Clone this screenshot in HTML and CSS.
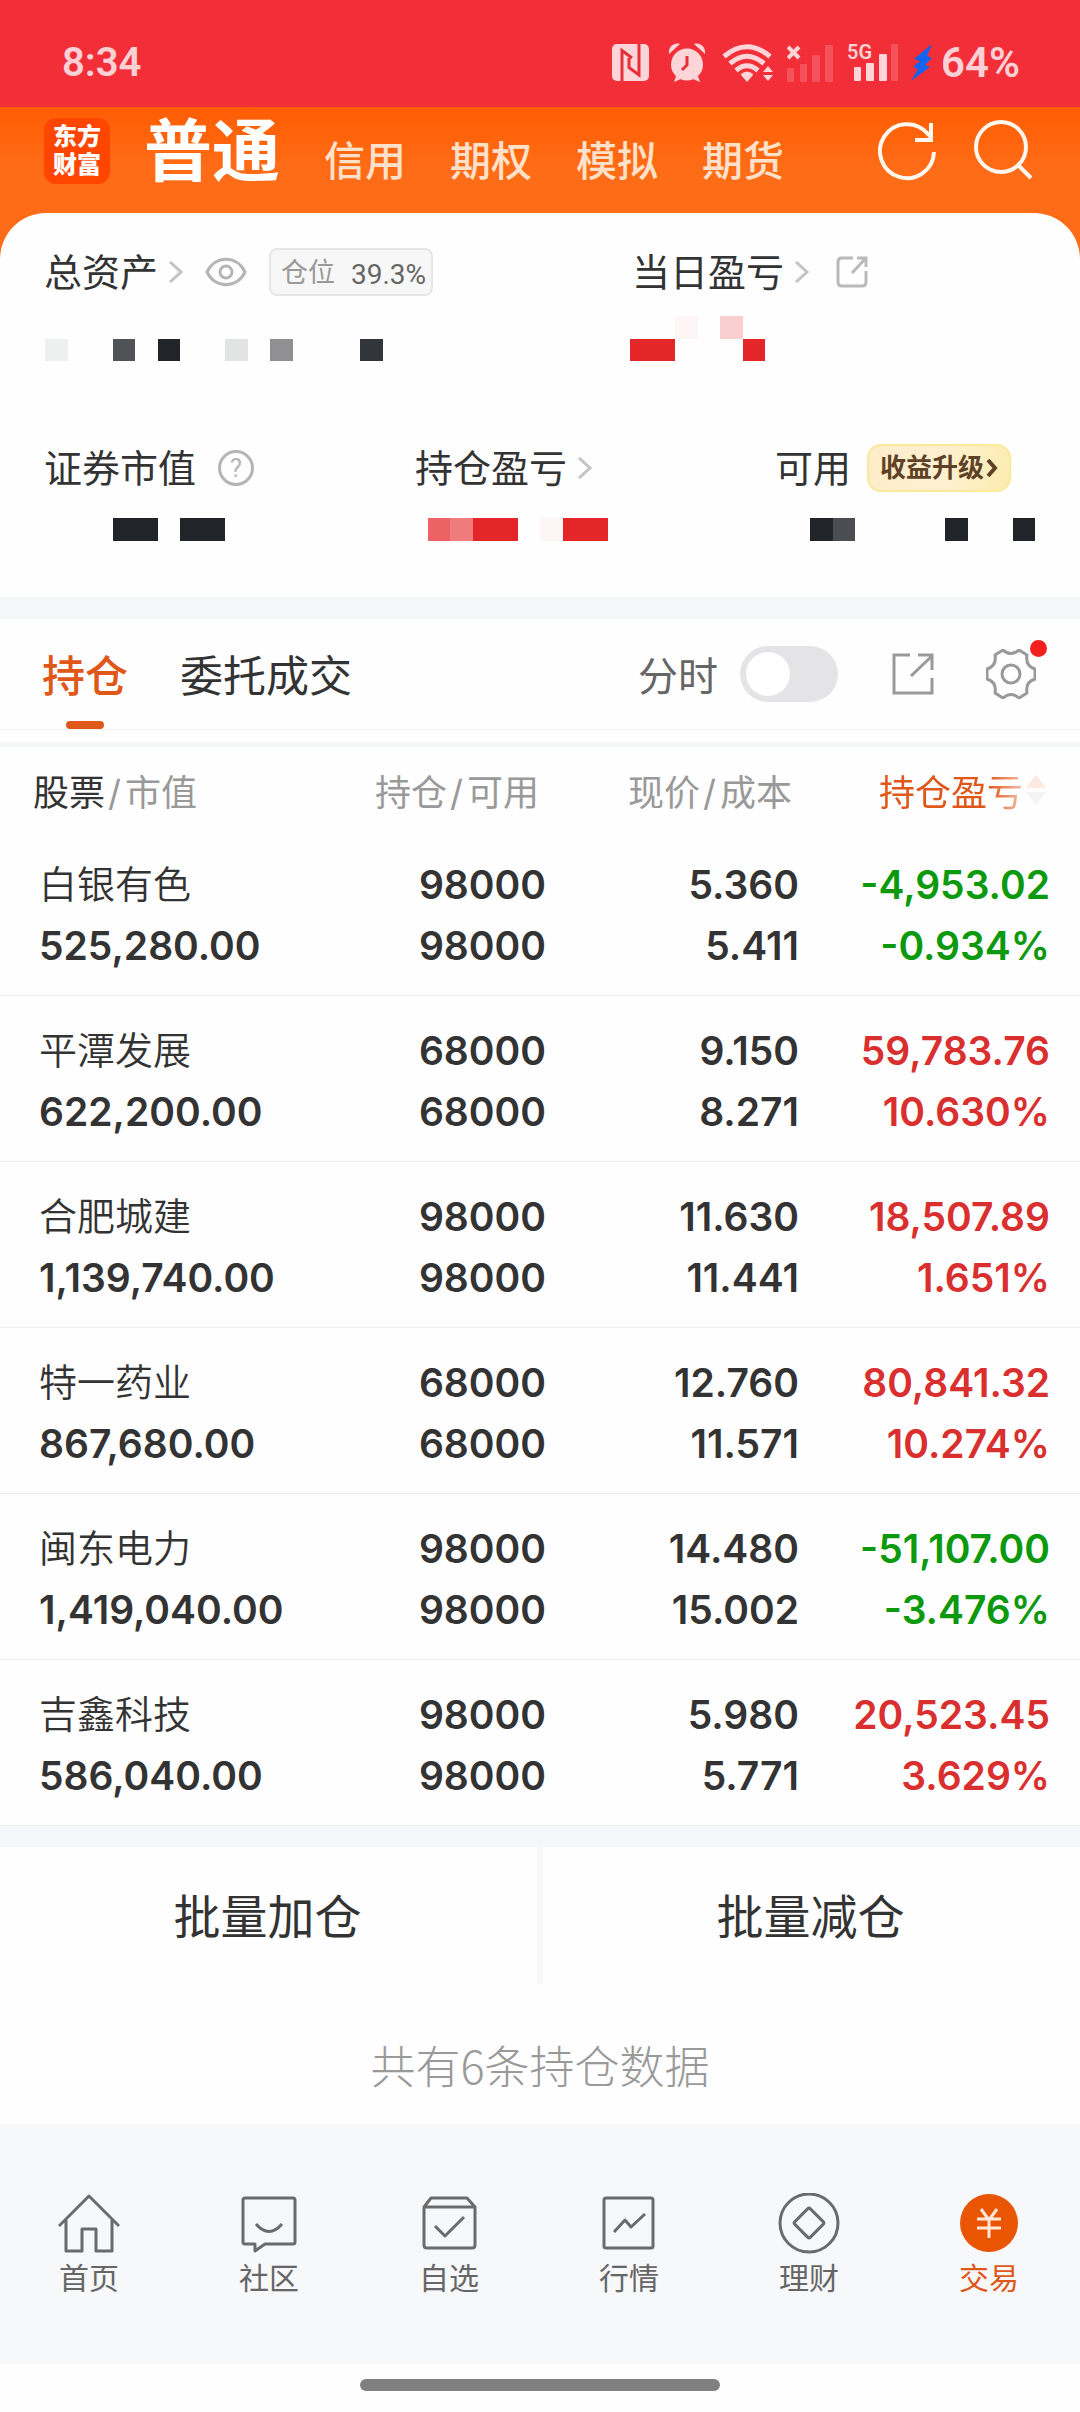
FILE: index.html
```html
<!DOCTYPE html>
<html lang="zh-CN">
<head>
    <meta charset="UTF-8">
    <meta name="viewport" content="width=device-width, initial-scale=1.0">
    <title>东方财富 - 交易</title>
    <link rel="stylesheet" href="styles.css">
</head>
<body>

    <!-- Status Bar -->
    <div class="status-bar">
        <span class="clock">8:34</span>
        <div class="status-icons">
            <svg class="nfc" width="37" height="37" viewBox="0 0 37 37">
                <rect width="37" height="37" rx="5" fill="#fdd5d8"/>
                <path d="M10 37V6.500L20 14M27 0V31L17 23.500V14" fill="none" stroke="#e5303a" stroke-width="3"/>
            </svg>
            <svg class="alarm" width="38" height="39" viewBox="0 0 38 39">
                <g fill="#fdd5d8">
                    <circle cx="19" cy="21.500" r="16"/>
                    <path d="M1 11C0 4 6-1 12 1zM37 11C38 4 32-1 26 1z"/>
                    <path d="M8 33l5 3-7 3zM30 33l-5 3 7 3z"/>
                </g>
                <path d="M19 13v9l-5 5" fill="none" stroke="#e5303a" stroke-width="3"/>
            </svg>
            <svg class="wifi" width="52" height="38" viewBox="0 0 52 38">
                <g fill="none" stroke="#fdd5d8" stroke-width="5">
                    <path d="M2 12.500Q25-7 48 12.500"/>
                    <path d="M8 19.500Q25 5 42 19.500"/>
                    <path d="M14 26.500Q25 17 36 26.500"/>
                </g>
                <path d="M19 30q6-5 12 0v1l-6 7-6-7z" fill="#fdd5d8"/>
                <path d="M46 22l5 6H41zM41 31h10l-5 6z" fill="#fdd5d8"/>
            </svg>
            <svg class="signal" width="46" height="38" viewBox="0 0 46 38">
                <g fill="#f6525b">
                    <rect y="24" width="7" height="14" rx="1"/>
                    <rect x="13" y="20" width="7" height="18" rx="1"/>
                    <rect x="25" y="11" width="8" height="27" rx="1"/>
                    <rect x="38" y="1" width="8" height="37" rx="1"/>
                </g>
                <path d="M1 3l11 11M12 3L1 14" stroke="#fdd5d8" stroke-width="4"/>
            </svg>
            <div class="mobile">
                <svg width="44" height="37" viewBox="0 0 44 37">
                    <rect y="23" width="7" height="14" rx="1" fill="#fdd5d8"/>
                    <rect x="12" y="19" width="8" height="18" rx="1" fill="#fdd5d8"/>
                    <rect x="25" y="10" width="8" height="27" rx="1" fill="#fdd5d8"/>
                    <rect x="37" y="0" width="7" height="37" rx="1" fill="#f6525b"/>
                </svg>
                <span class="network">5G</span>
            </div>
            <svg class="bolt" width="22" height="37" viewBox="0 0 22 37">
                <path d="M21 0L3 15l6 2-7 6 5 2L0 37 19 23l-5-2 7-7-5-2z" fill="#1264f0"/>
            </svg>
            <span class="battery">64%</span>
        </div>
    </div>

    <div class="top">
        <!-- Header Section -->
        <header>
            <div class="logo">东方<br>财富</div>
            <nav class="accounts">
                <a href="#" class="current">普通</a>
                <a href="#">信用</a>
                <a href="#">期权</a>
                <a href="#">模拟</a>
                <a href="#">期货</a>
            </nav>
            <div class="header-actions">
                <button type="button" aria-label="刷新">
                    <svg width="60" height="62" viewBox="0 0 60 62" fill="none" stroke="#fff6ee" stroke-width="4">
                        <path d="M56 32A27 27 0 1 1 49 13L54 18"/>
                        <path d="M53 3V20H37"/>
                    </svg>
                </button>
                <button type="button" aria-label="搜索">
                    <svg width="60" height="62" viewBox="0 0 60 62" fill="none" stroke="#fff6ee" stroke-width="4">
                        <circle cx="27" cy="27" r="25"/>
                        <path d="M44 45L57 58"/>
                    </svg>
                </button>
            </div>
        </header>

        <!-- Asset Summary -->
        <section class="summary">
            <div class="labels labels-two">
                <div class="label">
                    <a href="#">总资产<svg class="chevron" width="14" height="22" viewBox="0 0 14 22"><path d="M1 1l11 10L1 21"/></svg></a>
                    <button type="button" class="eye" aria-label="隐藏金额">
                        <svg width="42" height="30" viewBox="0 0 42 30" fill="none" stroke="#b5b5b5" stroke-width="3">
                            <path d="M2 15C10-2 32-2 40 15 32 32 10 32 2 15z"/>
                            <circle cx="21" cy="15" r="6"/>
                        </svg>
                    </button>
                    <span class="position">仓位 <b>39.3%</b></span>
                </div>
                <div class="label">
                    <a href="#">当日盈亏<svg class="chevron" width="14" height="22" viewBox="0 0 14 22"><path d="M1 1l11 10L1 21"/></svg></a>
                    <button type="button" class="share" aria-label="分享">
                        <svg width="32" height="32" viewBox="0 0 32 32" fill="none" stroke="#b9b9b9" stroke-width="3">
                            <path d="M17 2H6Q2 2 2 6V26Q2 30 6 30H26Q30 30 30 26V15"/>
                            <path d="M16 17L29 3M21 2H30V11"/>
                        </svg>
                    </button>
                </div>
            </div>
            <!-- amounts are masked into 48 blocks per line -->
            <svg class="mask mask-tall" viewBox="0 0 48 2" preserveAspectRatio="none">
                <path d="M2 1h1v1H2z" fill="#eef0f0"/>
                <path d="M5 1h1v1H5z" fill="#4f5356"/>
                <path d="M7 1h1v1H7z" fill="#212429"/>
                <path d="M10 1h1v1h-1z" fill="#e2e4e4"/>
                <path d="M12 1h1v1h-1z" fill="#909092"/>
                <path d="M16 1h1v1h-1z" fill="#323539"/>
                <path d="M28 1h2v1h-2zM33 1h1v1h-1z" fill="#e52629"/>
                <path d="M30 0h1v1h-1z" fill="#fef5f6"/>
                <path d="M32 0h1v1h-1z" fill="#f9cfd0"/>
            </svg>
            <div class="labels labels-three">
                <div class="label">
                    <span>证券市值</span>
                    <button type="button" class="help">?</button>
                </div>
                <div class="label">
                    <a href="#">持仓盈亏<svg class="chevron" width="14" height="22" viewBox="0 0 14 22"><path d="M1 1l11 10L1 21"/></svg></a>
                </div>
                <div class="label">
                    <span>可用</span>
                    <a href="#" class="upgrade">收益升级<svg width="12" height="20" viewBox="0 0 12 20"><path d="M2 2l7 8-7 8"/></svg></a>
                </div>
            </div>
            <svg class="mask" viewBox="0 0 48 1" preserveAspectRatio="none">
                <path d="M5 0h2v1H5zM8 0h2v1H8zM36 0h1v1h-1zM42 0h1v1h-1zM45 0h1v1h-1z" fill="#212429"/>
                <path d="M19 0h1v1h-1z" fill="#ec6265"/>
                <path d="M20 0h1v1h-1z" fill="#f07b7d"/>
                <path d="M21 0h2v1h-2zM25 0h2v1h-2z" fill="#e52629"/>
                <path d="M24 0h1v1h-1z" fill="#fef5f6"/>
                <path d="M37 0h1v1h-1z" fill="#4a4d51"/>
            </svg>
        </section>
    </div>

    <!-- Tabs -->
    <div class="tabs">
        <button type="button" class="tab active">持仓</button>
        <button type="button" class="tab">委托成交</button>
        <div class="tools">
            <label for="timeline">分时</label>
            <input type="checkbox" id="timeline" class="toggle">
            <button type="button" class="share" aria-label="分享">
                <svg width="42" height="42" viewBox="0 0 42 42" fill="none" stroke="#999" stroke-width="3">
                    <path d="M18 2H2V40H40V25"/>
                    <path d="M19 23L40 3M26 2H40V17"/>
                </svg>
            </button>
            <button type="button" class="settings" aria-label="设置">
                <svg width="50" height="50" viewBox="0 0 50 50" fill="none" stroke="#999" stroke-width="3" stroke-linejoin="round">
                    <path d="M17 1Q25 8 33 1L41 6Q39 17 49 20V30Q39 33 41 44L33 49Q25 42 17 49L9 44Q11 33 1 30V20Q11 17 9 6z"/>
                    <circle cx="25" cy="25" r="9"/>
                </svg>
                <i class="dot"></i>
            </button>
        </div>
    </div>

    <!-- Holdings -->
    <table class="holdings">
        <thead>
            <tr>
                <th class="stock"><b>股票</b><i>/</i>市值</th>
                <th class="amount">持仓<i>/</i>可用</th>
                <th class="price">现价<i>/</i>成本</th>
                <th class="profit">
                    <button type="button" class="sort">持仓盈亏<svg width="22" height="32" viewBox="0 0 22 32"><path d="M11 1l10 13H1z" fill="#f9b9a2"/><path d="M11 31l10-13H1z" fill="#ddd"/></svg></button>
                </th>
            </tr>
        </thead>
        <tbody>
            <tr>
                <td><span class="name">白银有色</span><span>525,280.00</span></td>
                <td><span>98000</span><span>98000</span></td>
                <td><span>5.360</span><span>5.411</span></td>
                <td class="down"><span>-4,953.02</span><span>-0.934%</span></td>
            </tr>
            <tr>
                <td><span class="name">平潭发展</span><span>622,200.00</span></td>
                <td><span>68000</span><span>68000</span></td>
                <td><span>9.150</span><span>8.271</span></td>
                <td class="up"><span>59,783.76</span><span>10.630%</span></td>
            </tr>
            <tr>
                <td><span class="name">合肥城建</span><span>1,139,740.00</span></td>
                <td><span>98000</span><span>98000</span></td>
                <td><span>11.630</span><span>11.441</span></td>
                <td class="up"><span>18,507.89</span><span>1.651%</span></td>
            </tr>
            <tr>
                <td><span class="name">特一药业</span><span>867,680.00</span></td>
                <td><span>68000</span><span>68000</span></td>
                <td><span>12.760</span><span>11.571</span></td>
                <td class="up"><span>80,841.32</span><span>10.274%</span></td>
            </tr>
            <tr>
                <td><span class="name">闽东电力</span><span>1,419,040.00</span></td>
                <td><span>98000</span><span>98000</span></td>
                <td><span>14.480</span><span>15.002</span></td>
                <td class="down"><span>-51,107.00</span><span>-3.476%</span></td>
            </tr>
            <tr>
                <td><span class="name">吉鑫科技</span><span>586,040.00</span></td>
                <td><span>98000</span><span>98000</span></td>
                <td><span>5.980</span><span>5.771</span></td>
                <td class="up"><span>20,523.45</span><span>3.629%</span></td>
            </tr>
        </tbody>
    </table>

    <!-- Batch Actions -->
    <div class="batch">
        <button type="button">批量加仓</button>
        <button type="button">批量减仓</button>
    </div>
    <p class="count">共有6条持仓数据</p>

    <!-- Bottom Navigation -->
    <nav class="bottom-nav">
        <a href="#">
            <svg width="62" height="62" viewBox="0 0 62 62">
                <path d="M1 33L31 3 61 33M8 27V58H24V36H38V58H54V27"/>
            </svg>
            首页
        </a>
        <a href="#">
            <svg width="62" height="62" viewBox="0 0 62 62">
                <path d="M7 5H55Q57 5 57 7V49Q57 51 55 51H27L17 58V51H7Q5 51 5 49V7Q5 5 7 5z"/>
                <path d="M18 31Q31 46 44 31"/>
            </svg>
            社区
        </a>
        <a href="#">
            <svg width="62" height="62" viewBox="0 0 62 62">
                <path d="M6 14H57V52Q57 55 54 55H9Q6 55 6 52V14L13 5H49L57 14"/>
                <path d="M17 33L27 43 46 24"/>
            </svg>
            自选
        </a>
        <a href="#">
            <svg width="62" height="62" viewBox="0 0 62 62">
                <rect x="6" y="5" width="49" height="50" rx="2"/>
                <path d="M16 39L27 27 33 34 47 21"/>
            </svg>
            行情
        </a>
        <a href="#">
            <svg width="62" height="62" viewBox="0 0 62 62">
                <circle cx="31" cy="30" r="29"/>
                <rect x="20" y="19" width="22" height="22" rx="2" transform="rotate(45 31 30)"/>
            </svg>
            理财
        </a>
        <a href="#" class="active">
            <svg width="62" height="62" viewBox="0 0 62 62">
                <circle cx="31" cy="30" r="29" class="coin"/>
                <path d="M23 16L31 27 39 16M19 26H43M19 35H43M31 27V45" class="yen"/>
            </svg>
            交易
        </a>
    </nav>
    <div class="home-bar"></div>

</body>
</html>
```
FILE: styles.css
```css
* {
    box-sizing: border-box;
}

body {
    font-family: Inter, "Noto Sans CJK SC", sans-serif;
    margin: 0;
    background-color: #fefefe;
    color: #333;
}

a {
    color: inherit;
    text-decoration: none;
}

button {
    font: inherit;
    color: inherit;
    padding: 0;
    border: 0;
    background: none;
}

svg {
    display: block;
    flex: none;
}

/* Status bar */
.status-bar {
    display: flex;
    justify-content: space-between;
    align-items: center;
    height: 107px;
    padding: 18px 60px 0 62px;
    background-color: #f22f38;
    color: #fdd0d5;
    font-family: Roboto, sans-serif;
    font-size: 40px;
    font-weight: 600;
}

.status-icons {
    display: flex;
    align-items: center;
}

.alarm {
    margin-left: 19px;
}

.wifi {
    margin-left: 16px;
}

.signal {
    margin-left: 13px;
}

.mobile {
    position: relative;
    margin-left: 21px;
}

.network {
    position: absolute;
    left: -7px;
    top: -2px;
    font-size: 20px;
    line-height: 20px;
}

.bolt {
    margin-left: 13px;
}

.battery {
    margin-left: 8px;
    font-size: 42px;
}

/* Header */
.top {
    background-color: #ff6c17;
}

header {
    display: flex;
    align-items: center;
    height: 106px;
    padding: 0 46px 0 44px;
    background: linear-gradient(#ff5d03, #ff6c17 60%);
    color: #ffe0c9;
}

.logo {
    width: 66px;
    height: 66px;
    margin-bottom: 18px;
    padding-top: 5px;
    border-radius: 12px;
    background-color: #ff4600;
    color: white;
    font-size: 24px;
    font-weight: 900;
    line-height: 28px;
    text-align: center;
}

.accounts {
    display: flex;
    align-items: baseline;
    gap: 44px;
    height: 96px;
    margin: 0 auto 18px 34px;
    font-size: 41px;
    font-weight: 500;
}

.accounts .current {
    color: white;
    font-size: 68px;
    font-weight: 700;
    line-height: 96px;
}

.header-actions {
    display: flex;
    gap: 36px;
    margin-bottom: 18px;
}

/* Summary */
.summary {
    padding: 35px 0 56px;
    border-radius: 46px 46px 0 0;
    background-color: #fefefe;
}

.labels {
    display: grid;
    padding-left: 44px;
    font-size: 38px;
    line-height: 46px;
}

.labels-two {
    grid-template-columns: 588fr 448fr;
}

.labels-three {
    grid-template-columns: 371fr 360fr 305fr;
    margin-top: 83px;
}

.label {
    display: flex;
    align-items: center;
    height: 48px;
}

.label a {
    display: flex;
    align-items: center;
}

.chevron {
    margin-left: 11px;
    fill: none;
    stroke: #c4c4c4;
    stroke-width: 3;
}

.eye {
    margin-left: 22px;
}

.label .share {
    margin-left: 27px;
}

.position {
    display: flex;
    gap: 16px;
    height: 48px;
    margin-left: 22px;
    padding: 0 5px 0 10px;
    border: 2px solid #e6e6e6;
    border-radius: 8px;
    background-color: #f7f7f7;
    color: #999;
    font-size: 27px;
    line-height: 46px;
}

.position b {
    color: #666;
    font-family: Roboto, sans-serif;
    font-size: 28px;
    font-weight: 400;
    line-height: 50px;
}

.help {
    width: 36px;
    height: 36px;
    margin-left: 22px;
    border: 3px solid #b5b5b5;
    border-radius: 50%;
    color: #b5b5b5;
    font-family: Roboto, sans-serif;
    font-size: 26px;
    line-height: 30px;
}

.label .upgrade {
    height: 48px;
    margin-left: 16px;
    padding: 0 11px;
    border: 2px solid #fbea9c;
    border-radius: 14px;
    background: linear-gradient(100deg, #fdecc8, #fdf0d2 50%, #fcecb0);
    color: #5f4226;
    font-size: 26px;
    font-weight: 700;
}

.upgrade svg {
    margin-left: 2px;
    fill: none;
    stroke: #5f4226;
    stroke-width: 4;
}

.mask {
    width: 100%;
    height: 23px;
    margin-top: 26px;
    shape-rendering: crispEdges;
}

.mask-tall {
    height: 45px;
    margin-top: 20px;
}

/* Tabs */
.tabs {
    display: flex;
    align-items: center;
    height: 133px;
    padding: 0 44px 0 42px;
    border-top: 22px solid #f5f7fa;
    border-bottom: 1px solid #f0f1f2;
}

.tab {
    position: relative;
    height: 110px;
    margin-right: 52px;
    padding-bottom: 2px;
    font-size: 43px;
}

.tab.active {
    color: #e0571a;
    font-weight: 500;
}

.tab.active::after {
    content: "";
    position: absolute;
    left: 50%;
    bottom: 0;
    width: 38px;
    height: 8px;
    margin-left: -19px;
    border-radius: 4px;
    background-color: #e0571a;
}

.tools {
    display: flex;
    align-items: center;
    margin-left: auto;
    color: #666;
    font-size: 40px;
}

.toggle {
    appearance: none;
    width: 98px;
    height: 56px;
    margin: 0 54px 0 22px;
    padding: 6px;
    border-radius: 28px;
    background-color: #e4e4e6;
}

.toggle::before {
    content: "";
    display: block;
    width: 44px;
    height: 44px;
    border-radius: 50%;
    background-color: white;
}

.toggle:checked::before {
    margin-left: auto;
}

.settings {
    position: relative;
    margin-left: 52px;
}

.dot {
    position: absolute;
    top: -9px;
    right: -11px;
    width: 17px;
    height: 17px;
    border-radius: 50%;
    background-color: #f5201d;
}

/* Holdings table */
.holdings {
    width: 100%;
    margin-top: 12px;
    border-top: 5px solid #f5f7f9;
    border-collapse: separate;
    border-spacing: 0;
    table-layout: fixed;
}

th {
    height: 83px;
    padding: 2px 7px 0 0;
    color: #999;
    font-size: 36px;
    font-weight: 400;
    text-align: right;
    white-space: nowrap;
}

th b {
    color: #333;
    font-weight: 400;
}

th i {
    margin: 0 4px 0 3px;
    font-style: normal;
}

th.stock {
    padding-left: 33px;
    text-align: left;
}

.amount {
    width: 240px;
}

.price {
    width: 253px;
}

th.profit {
    width: 281px;
    padding-right: 33px;
}

.sort {
    display: flex;
    align-items: center;
    gap: 2px;
    margin-left: auto;
    color: #e0571a;
    mask-image: linear-gradient(90deg, #000 65%, rgba(0, 0, 0, 0.3) 88%);
}

td {
    height: 166px;
    padding: 24px 0 19px;
    border-bottom: 1px solid #eee;
    font-size: 39px;
    font-weight: 600;
    line-height: 61px;
    text-align: right;
}

td:first-child {
    padding-left: 39px;
    text-align: left;
}

td:last-child {
    padding-right: 30px;
}

td span {
    display: block;
}

td .name {
    font-size: 38px;
    font-weight: 350;
}

.up {
    color: #d92f2f;
}

.down {
    color: #0d990d;
}

/* Batch actions */
.batch {
    display: grid;
    grid-template-columns: 1fr 1fr;
    gap: 6px;
    border-top: 21px solid #f5f7fa;
    background-color: #f8f8fa;
}

.batch button {
    height: 137px;
    padding: 0 2px 4px 0;
    background-color: #fefefe;
    font-size: 47px;
}

.count {
    margin: 0;
    padding: 46px 0 24px;
    color: #999;
    font-family: "Noto Sans CJK SC", sans-serif;
    font-size: 45px;
    font-weight: 300;
    line-height: 70px;
    text-align: center;
}

/* Bottom navigation */
.bottom-nav {
    display: grid;
    grid-template-columns: repeat(6, 1fr);
    height: 240px;
    padding-top: 69px;
    background-color: #f7f8fa;
    color: #666;
    font-size: 30px;
    line-height: 46px;
}

.bottom-nav a {
    display: flex;
    flex-direction: column;
    align-items: center;
    padding-right: 2px;
}

.bottom-nav svg {
    fill: none;
    stroke: #6b6b6b;
    stroke-width: 3;
    stroke-linejoin: round;
}

.bottom-nav .active {
    color: #e0571a;
}

.bottom-nav .coin {
    fill: #ea5504;
    stroke: none;
}

.bottom-nav .yen {
    stroke: #ffe8d8;
}

.home-bar {
    width: calc(100% / 3);
    height: 12px;
    margin: 15px auto 21px;
    border-radius: 6px;
    background-color: #808080;
}
```
